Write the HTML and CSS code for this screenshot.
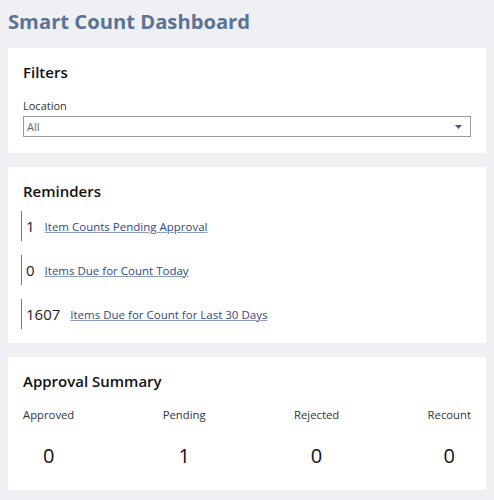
FILE: index.html
```html
<!DOCTYPE html>
<html lang="en">
<head>
<meta charset="utf-8">
<title>Smart Count Dashboard</title>
<link rel="stylesheet" href="styles.css">
</head>
<body>
<h1 class="page-title">Smart Count Dashboard</h1>

<section class="card">
  <h2 class="card-title">Filters</h2>
  <label class="field-label" for="loc">Location</label>
  <div class="select" id="loc">
    <span class="select-value">All</span>
    <svg class="select-arrow" width="7" height="4" viewBox="0 0 7 4"><path d="M0 0 H7 L3.5 4 Z" fill="#4c5f83"/></svg>
  </div>
</section>

<section class="card card-reminders">
  <h2 class="card-title">Reminders</h2>
  <div class="reminders">
    <div class="reminder"><span class="reminder-count">1</span><a class="reminder-link" href="#">Item Counts Pending Approval</a></div>
    <div class="reminder"><span class="reminder-count">0</span><a class="reminder-link" href="#">Items Due for Count Today</a></div>
    <div class="reminder"><span class="reminder-count">1607</span><a class="reminder-link" href="#">Items Due for Count for Last 30 Days</a></div>
  </div>
</section>

<section class="card card-summary">
  <h2 class="card-title">Approval Summary</h2>
  <div class="summary">
    <div class="summary-col"><div class="summary-label">Approved</div><div class="summary-value">0</div></div>
    <div class="summary-col"><div class="summary-label">Pending</div><div class="summary-value">1</div></div>
    <div class="summary-col"><div class="summary-label">Rejected</div><div class="summary-value">0</div></div>
    <div class="summary-col"><div class="summary-label">Recount</div><div class="summary-value">0</div></div>
  </div>
</section>
</body>
</html>
```

FILE: styles.css
```css
* { box-sizing: border-box; }

html, body {
  margin: 0;
  background: #eff0f4;
}

body {
  padding: 0 8px;
  font-family: "Open Sans", "Noto Sans", sans-serif;
  color: #222;
}

.page-title {
  margin: 0;
  padding-top: 6px;
  height: 48px;
  font-size: 20.2px;
  line-height: 30px;
  font-weight: 700;
  color: #5b7396;
}

.card {
  background: #fff;
  padding: 14px 15px 16px;
  margin-bottom: 14px;
}

.card-reminders { padding-bottom: 14px; }
.card-summary { padding-bottom: 22px; }

.card-title {
  margin: 0;
  font-size: 15px;
  line-height: 20px;
  font-weight: 600;
  color: #111;
}

.field-label {
  display: block;
  margin-top: 16px;
  font-size: 11px;
  line-height: 15px;
  color: #333;
}

.select {
  margin-top: 3px;
  height: 21px;
  border: 1px solid #9a9a9a;
  display: flex;
  align-items: center;
  justify-content: space-between;
  padding: 0 8px 0 3px;
}

.select-value {
  font-size: 11px;
  color: #666;
}

.select-arrow { display: block; }

.reminders {
  margin-top: 10px;
  display: flex;
  flex-direction: column;
  gap: 14px;
}

.reminder {
  height: 30px;
  margin-left: -2px;
  border-left: 1px solid #777;
  padding-left: 4px;
  display: flex;
  align-items: center;
  gap: 10px;
}

.reminder-count {
  font-size: 15px;
  color: #222;
}

.reminder-link {
  font-size: 11.5px;
  color: #2f4a86;
  text-decoration: underline;
  text-decoration-color: #8d9cbc;
}

.summary {
  margin-top: 16px;
  display: flex;
  justify-content: space-between;
}

.summary-col {
  text-align: center;
}

.summary-label {
  font-size: 11.3px;
  line-height: 15px;
  color: #333;
}

.summary-value {
  margin-top: 22px;
  font-size: 20px;
  line-height: 24px;
  color: #111;
}
```
